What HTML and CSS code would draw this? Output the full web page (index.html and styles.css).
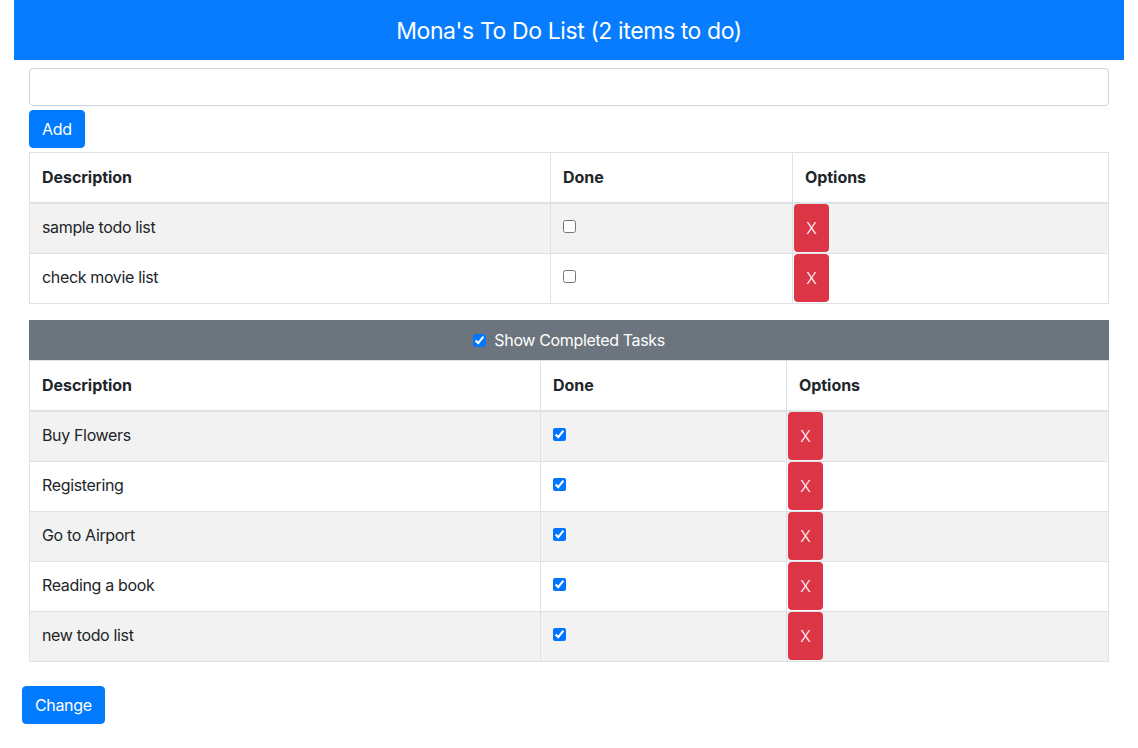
FILE: index.html
```html
<!DOCTYPE html>
<html lang="en">
<head>
<meta charset="utf-8">
<title>Mona's To Do List</title>
<link rel="stylesheet" href="styles.css">
</head>
<body>
<div class="page">
  <header class="banner">Mona's To Do List (2 items to do)</header>
  <main class="content">
    <input class="new-item" type="text">
    <button class="btn btn-primary add-btn">Add</button>
    <table class="todo-table">
      <colgroup><col class="c1-desc"><col class="c1-done"><col></colgroup>
      <thead>
        <tr><th>Description</th><th>Done</th><th>Options</th></tr>
      </thead>
      <tbody>
        <tr><td>sample todo list</td><td><input type="checkbox" class="chk"></td><td class="opt"><button class="btn-del">X</button></td></tr>
        <tr><td>check movie list</td><td><input type="checkbox" class="chk"></td><td class="opt"><button class="btn-del">X</button></td></tr>
      </tbody>
    </table>
    <div class="completed-bar">
      <label><input type="checkbox" class="chk" checked> Show Completed Tasks</label>
    </div>
    <table class="todo-table done-table">
      <colgroup><col class="c2-desc"><col class="c2-done"><col></colgroup>
      <thead>
        <tr><th>Description</th><th>Done</th><th>Options</th></tr>
      </thead>
      <tbody>
        <tr><td>Buy Flowers</td><td><input type="checkbox" class="chk" checked></td><td class="opt"><button class="btn-del">X</button></td></tr>
        <tr><td>Registering</td><td><input type="checkbox" class="chk" checked></td><td class="opt"><button class="btn-del">X</button></td></tr>
        <tr><td>Go to Airport</td><td><input type="checkbox" class="chk" checked></td><td class="opt"><button class="btn-del">X</button></td></tr>
        <tr><td>Reading a book</td><td><input type="checkbox" class="chk" checked></td><td class="opt"><button class="btn-del">X</button></td></tr>
        <tr><td>new todo list</td><td><input type="checkbox" class="chk" checked></td><td class="opt"><button class="btn-del">X</button></td></tr>
      </tbody>
    </table>
  </main>
  <button class="btn btn-primary change-btn">Change</button>
</div>
</body>
</html>
```
FILE: styles.css
```css
* { box-sizing: border-box; }
html, body {
  margin: 0;
  padding: 0;
  background: #fff;
}
body {
  font-family: Inter, "Noto Sans", "Liberation Sans", sans-serif;
  font-size: 16px;
  line-height: 24px;
  color: #212529;
  letter-spacing: -0.35px;
}
.page {
  padding: 0 14px;
}
.banner {
  height: 60px;
  background: #077cff;
  color: #fff;
  font-size: 23px;
  letter-spacing: -0.4px;
  line-height: 62px;
  text-align: center;
}
.content {
  padding: 8px 15px 0;
  display: flex;
  flex-direction: column;
  align-items: flex-start;
}
.new-item {
  display: block;
  width: 100%;
  height: 38px;
  border: 1px solid #ced4da;
  border-radius: 4px;
  font: inherit;
  padding: 6px 12px;
  margin: 0;
  outline: none;
}
.btn {
  font-family: inherit;
  font-size: 16px;
  letter-spacing: -0.35px;
  line-height: 24px;
  height: 38px;
  padding: 6px 12px;
  border: 1px solid transparent;
  border-radius: 4px;
  cursor: pointer;
}
.btn-primary {
  background: #007bff;
  border-color: #007bff;
  color: #fff;
}
.add-btn {
  margin-top: 4px;
}
.todo-table {
  width: 100%;
  border-collapse: collapse;
  border: 1px solid #dee2e6;
  margin-top: 4px;
}
.c1-desc { width: 521px; }
.c1-done { width: 242px; }
.c2-desc { width: 511px; }
.c2-done { width: 246px; }
.todo-table th,
.todo-table td {
  border: 1px solid #dee2e6;
  padding: 12px;
  line-height: 25px;
  text-align: left;
  vertical-align: top;
}
.todo-table td {
  padding-top: 11px;
  padding-bottom: 13px;
}
.todo-table th {
  font-weight: 700;
  letter-spacing: -0.05px;
  border-bottom-width: 2px;
}
.todo-table tbody tr:nth-child(odd) {
  background: #f2f2f2;
}
.chk {
  width: 13px;
  height: 13px;
  margin: 5px 0 0;
  vertical-align: top;
}
.todo-table td.opt {
  padding: 0 0 0 1px;
}
.btn-del {
  display: block;
  width: 35px;
  height: 48px;
  padding: 0;
  border: none;
  border-radius: 4px;
  background: #dc3545;
  color: #fff;
  font-family: inherit;
  font-size: 16px;
  font-weight: 300;
  cursor: pointer;
}
.completed-bar {
  width: 100%;
  height: 40px;
  margin-top: 16px;
  background: #6c757d;
  color: #fff;
  text-align: center;
  line-height: 40px;
}
.completed-bar .chk {
  margin: 0 4px 0 0;
  vertical-align: -1px;
}
.done-table {
  margin-top: 0;
}
.change-btn {
  margin: 24px 0 0 8px;
}
```
